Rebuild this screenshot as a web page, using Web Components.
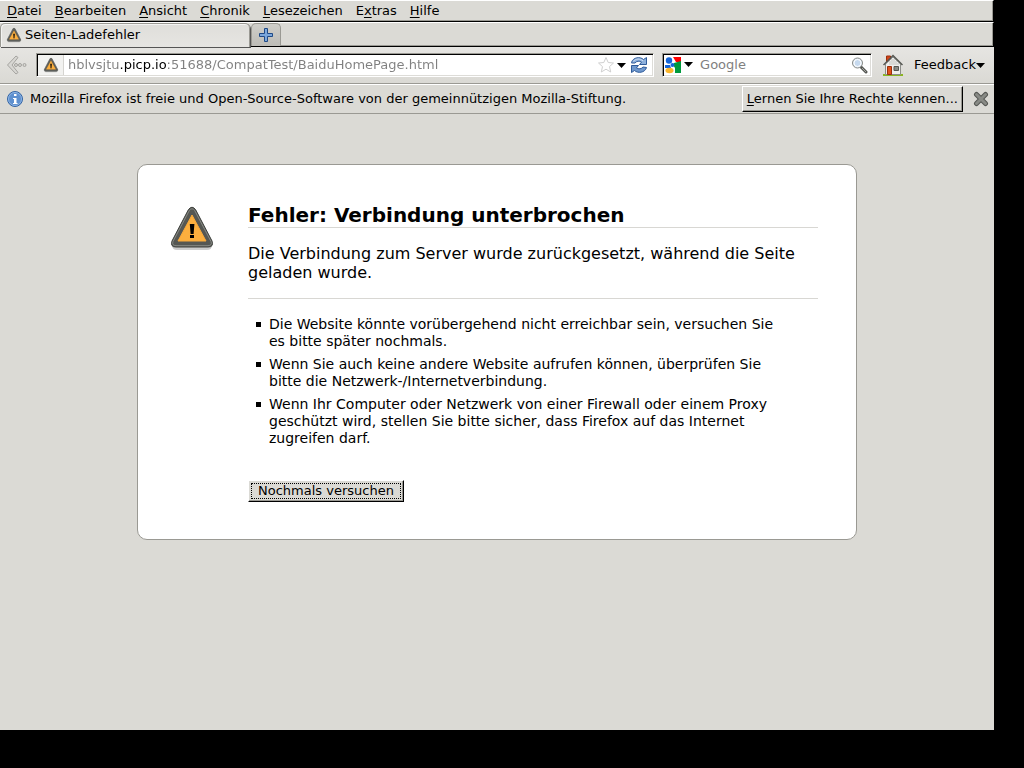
<!DOCTYPE html>
<html lang="de">
<head>
<meta charset="utf-8">
<title>Seiten-Ladefehler</title>
<style>
  html { background: #000; }
  body { margin: 0; font: 13px/16px "DejaVu Sans", sans-serif; color: #000; }
</style>
</head>
<body>
<browser-window>
  <menu-bar slot="chrome"></menu-bar>
  <tab-strip slot="chrome">Seiten-Ladefehler</tab-strip>
  <nav-toolbar slot="chrome"></nav-toolbar>
  <info-bar slot="chrome">Mozilla Firefox ist freie und Open-Source-Software von der gemeinnützigen Mozilla-Stiftung.</info-bar>
  <error-card>
    <span slot="title">Fehler: Verbindung unterbrochen</span>
    <span slot="summary">Die Verbindung zum Server wurde zurückgesetzt, während die Seite geladen wurde.</span>
  </error-card>
</browser-window>
<script>
  const define = (name, html) => {
    const template = document.createElement('template');
    template.innerHTML = html;
    customElements.define(name, class extends HTMLElement {
      constructor() {
        super();
        this.attachShadow({ mode: 'open' }).append(template.content.cloneNode(true));
      }
    });
  };

  define('warn-icon', `
    <style>
      :host { display: block; flex: none; width: 16px; height: 16px; }
      svg { display: block; width: 100%; height: 100%; }
    </style>
    <svg viewBox="0 0 48 48" aria-hidden="true">
      <path d="M4 41h40q0 5-5 5H9q-5 0-5-5z" fill="#000" opacity=".2"/>
      <path d="M20.500 5.500Q24 1 27.500 5.500L44 37Q46 43 40 43H8Q2 43 4 37Z" fill="#555753" stroke="#3e403c"/>
      <path d="M21.300 6.500Q24 3 26.700 6.500L43 37.500Q44.500 41.500 40 41.700H8Q3.500 41.500 5 37.500Z" fill="none" stroke="#888a85"/>
      <path d="M24 11 38 37H10Z" fill="#fcaf3e" stroke="#f9a93a" stroke-linejoin="round"/>
      <path d="M21.800 20h4.600l-.8 10h-3zM22 31h4v3h-4z" fill="#000"/>
    </svg>`);

  define('menu-bar', `
    <style>
      :host { display: flex; height: 19px; border-top: 1px solid #fff; border-bottom: 1px solid #000;
        border-right: 1px solid #000; box-shadow: inset -1px -1px #9a9993; padding: 0 0 1px 1px; }
      button { border: 0; background: none; margin: 0; padding: 0 7px 0 6px; font: inherit; color: inherit; }
      u { text-underline-offset: 2px; text-decoration-thickness: 1px; text-decoration-skip-ink: none; }
    </style>
    <button><u>D</u>atei</button><button><u>B</u>earbeiten</button><button><u>A</u>nsicht</button><button><u>C</u>hronik</button><button><u>L</u>esezeichen</button><button>E<u>x</u>tras</button><button><u>H</u>ilfe</button>`);

  define('tab-strip', `
    <style>
      :host { display: flex; box-sizing: border-box; height: 25px; border-top: 1px solid #fff;
        border-bottom: 1px solid #000; border-right: 1px solid #000; box-shadow: inset -1px -1px #9a9993; }
      button { box-sizing: border-box; margin: 0; font: inherit; color: inherit; border: 1px solid #9a9993;
        border-bottom: 0; border-radius: 5px 5px 0 0; }
      .tab { display: flex; align-items: center; gap: 3px; width: 250px; height: 24px; padding: 0 5px 2px;
        background: linear-gradient(#dfdeda, #e6e5e2); box-shadow: inset 1px 1px #f4f4f2, 1px 1px #555; z-index: 1; }
      .new { display: grid; place-items: center; width: 30px; height: 23px; margin-left: 1px; padding: 0;
        background: linear-gradient(#cfcec9, #bdbcb7); }
      svg { width: 16px; height: 16px; }
    </style>
    <button class="tab"><warn-icon></warn-icon><slot></slot></button>
    <button class="new" aria-label="Neuer Tab"><svg viewBox="0 0 16 16"><path d="M6.500 1.500h3v5h5v3h-5v5h-3v-5h-5v-3h5z" fill="#7ba7dc" stroke="#204a87"/></svg></button>`);

  define('nav-toolbar', `
    <style>
      :host { display: flex; align-items: center; box-sizing: border-box; height: 37px; padding: 0 9px 0 6px;
        background: linear-gradient(#e6e5e2, #dad9d4); border-bottom: 1px solid #9a9993; }
      button { display: flex; align-items: center; flex: none; margin: 0; padding: 0; border: 0; background: none;
        font: inherit; color: inherit; }
      svg { display: block; flex: none; }
      .field { display: flex; align-items: center; box-sizing: border-box; min-width: 0; height: 24px; background: #fff;
        border: 1px solid; border-color: #9a9993 #fff #fff #9a9993;
        box-shadow: inset 1px 1px #000, inset -1px -1px #dddcd8; padding: 2px 3px 2px 1px; }
      .url { flex: 3 1 0; margin-left: 8px; }
      .search { flex: 1 1 0; margin-left: 8px; }
      input { flex: 1; min-width: 0; box-sizing: border-box; height: 20px; margin: 0; border: 0; padding: 0 4px 2px;
        outline: 0; background: none; font: inherit; color: #808080; }
      input::placeholder { color: #808080; opacity: 1; }
      .url input { -webkit-text-fill-color: transparent; -webkit-background-clip: text; background-clip: text;
        background-image: linear-gradient(90deg, #808080 56px, #000 56px, #000 103px, #808080 103px); }
      .id { width: 26px; height: 20px; justify-content: center; background: #f2f2f0; border-right: 1px solid #d5d4d0; }
      .home { margin: 0 11px 0 11px; }
    </style>
    <button aria-label="Zurück"><svg width="22" height="22" viewBox="0 0 22 22"><path d="M10 2 1.500 11 10 20l2-1.500L6 11l6-7.500z" fill="#d8d7d3" stroke="#a4a39f"/><g fill="#d8d7d3" stroke="#a4a39f"><circle cx="10" cy="11" r="1.500"/><circle cx="14" cy="11" r="1.500"/><circle cx="18.500" cy="11" r="1.500"/></g></svg></button>
    <div class="field url">
      <button class="id" aria-label="Website-Identität"><warn-icon></warn-icon></button>
      <input aria-label="Adresse" value="hblvsjtu.picp.io:51688/CompatTest/BaiduHomePage.html">
      <button aria-label="Lesezeichen setzen"><svg width="18" height="18" viewBox="0 0 18 18"><path d="m9 1.500 2.200 5 5.300.5-4 3.600 1.200 5.400L9 13.200 4.300 16l1.200-5.400-4-3.600 5.300-.5z" fill="#fff" stroke="#d0d0d0"/></svg></button>
      <button aria-label="Verlauf"><svg width="13" height="16" viewBox="0 0 13 16"><path d="M2 6h9L6.500 11z"/></svg></button>
      <button aria-label="Neu laden"><svg width="22" height="18" viewBox="0 0 22 18"><g fill="#8db0dc" stroke="#2f5b9a" stroke-linejoin="round"><path d="M3.500 6.500C5 1 12.500.5 15.500 3.500L18.500 1.500V8.500H11.500L13.500 6.200C11.500 4.500 8.500 5 7 7H3.500z"/><path d="M18.500 11.500C17 17 9.500 17.500 6.500 14.500L3.500 16.500V9.500H10.500L8.500 11.800C10.500 13.500 13.500 13 15 11z" fill="#6f98cd"/></g><path d="M5.500 5.500C7.500 2.500 12 2.200 15 4.800" fill="none" stroke="#cfdff2"/></svg></button>
    </div>
    <div class="field search">
      <button aria-label="Suchmaschine"><svg width="32" height="18" viewBox="0 0 32 18"><path d="M9 1h8v5h-5z" fill="#f00"/><path d="M10 7 17 5v12h-6V12L9 9z" fill="#009a3d"/><circle cx="5" cy="4.500" r="3.200" fill="#1565d8"/><circle cx="8.500" cy="9" r="2" fill="#1565d8"/><path d="M1 9h5l1 3H1z" fill="#1565d8"/><ellipse cx="5.500" cy="14.500" rx="4" ry="2.700" fill="#fbb52a"/><path d="M20 6h9l-4.500 5z"/></svg></button>
      <input aria-label="Google-Suche" placeholder="Google">
      <button aria-label="Suchen"><svg width="17" height="18" viewBox="0 0 17 18"><path d="m10 11 5 5" stroke="#555753" stroke-width="3" stroke-linecap="round"/><path d="m11 12 4 4" stroke="#a5a7a2"/><circle cx="6.500" cy="7" r="5" fill="#dce8f5" stroke="#888a85"/><circle cx="6.500" cy="7" r="3.500" fill="#c6d9ee" stroke="#fff"/></svg></button>
    </div>
    <button class="home" aria-label="Startseite"><svg width="20" height="22" viewBox="0 0 20 22"><path d="M0 21h20" stroke="#8ab520" stroke-width="2"/><path d="M3.500 2h4v6h-4z" fill="#d2451a" stroke="#9b2f0b"/><path d="M2.500 10 10 3l7.500 7v10.500h-15z" fill="#eeeeec" stroke="#8c8d89"/><path d="M7 7v4M9 5v6M11 5v6M13 7v4M15 9v2" stroke="#c4c5c1"/><path d="M.5 11 10 1.500 19.500 11" fill="none" stroke="#555753" stroke-width="1.500"/><path d="M4.500 12.500h4v8h-4z" fill="#e0501b" stroke="#9b2f0b"/><path d="M11 12.500h4.500v4H11z" fill="#888a85" stroke="#555753"/></svg></button>
    <button class="feedback">Feedback<svg width="9" height="16" viewBox="0 0 9 16"><path d="M0 6h9L4.500 11z"/></svg></button>`);

  define('info-bar', `
    <style>
      :host { display: flex; align-items: center; box-sizing: border-box; height: 30px; padding: 0 5px 0 7px;
        border-top: 1px solid #fff; border-bottom: 1px solid #9a9993; }
      svg { display: block; flex: none; }
      p { flex: 1; margin: 0 0 0 7px; }
      button { margin: 0; padding: 0; border: 0; background: none; font: inherit; color: inherit; }
      .rights { box-sizing: border-box; height: 26px; padding: 0 4px 1px; border: 1px solid;
        border-color: #fff #000 #000 #fff; box-shadow: inset -1px -1px #9a9993; }
      .close { margin-left: 10px; }
      u { text-underline-offset: 2px; text-decoration-thickness: 1px; }
    </style>
    <svg width="16" height="16" viewBox="0 0 16 16" aria-hidden="true"><circle cx="8" cy="8" r="7.500" fill="#5e90cf" stroke="#3465a4"/><circle cx="8" cy="8" r="6.500" fill="none" stroke="#8fb4e3"/><path d="M7 3h2.500v2H7zM6 7h3.500v5h1v1H6v-1h1V8H6z" fill="#fff"/></svg>
    <p><slot></slot></p>
    <button class="rights"><u>L</u>ernen Sie Ihre Rechte kennen...</button>
    <button class="close" aria-label="Schließen"><svg width="16" height="16" viewBox="0 0 16 16"><path d="m3.500 3.500 9 9m0-9-9 9" stroke="#555753" stroke-width="5" stroke-linecap="round"/><path d="m3.500 3.500 9 9m0-9-9 9" stroke="#888a85" stroke-width="3" stroke-linecap="round"/></svg></button>`);

  define('error-card', `
    <style>
      :host { display: grid; grid-template-columns: 48px minmax(0, 1fr); column-gap: 32px; box-sizing: border-box;
        width: 100%; max-width: 720px; margin: 50px auto 0; padding: 39px 38px 37px 30px; background: #fff;
        border: 1px solid #9a9993; border-radius: 10px; }
      warn-icon { width: 48px; height: 48px; }
      h1 { margin: 0; font-size: 20px; line-height: 23px; border-bottom: 1px solid #d8d7d3; }
      .summary { margin: 0; padding: 16px 0; font-size: 16px; line-height: 19px; border-bottom: 1px solid #d8d7d3; }
      ul { display: grid; gap: 6px; margin: 17px 40px 0 0; padding: 0 0 0 8px; list-style: none;
        font-size: 14px; line-height: 17px; }
      li { display: grid; grid-template-columns: 5px minmax(0, 1fr); column-gap: 8px; }
      li::before { content: ""; height: 5px; margin-top: 6px; background: #000; }
      button { margin: 33px 0 0; padding: 2px; border: 1px solid; border-color: #fff #000 #000 #fff;
        background: #dbdad5; box-shadow: inset -1px -1px #9a9993; font: inherit; color: inherit; }
      button span { display: block; padding: 0 6px; border: 1px dotted #000; line-height: 14px; }
    </style>
    <warn-icon></warn-icon>
    <div>
      <h1><slot name="title"></slot></h1>
      <p class="summary"><slot name="summary"></slot></p>
      <ul>
        <li>Die Website könnte vorübergehend nicht erreichbar sein, versuchen Sie es bitte später nochmals.</li>
        <li>Wenn Sie auch keine andere Website aufrufen können, überprüfen Sie bitte die Netzwerk-/Internetverbindung.</li>
        <li>Wenn Ihr Computer oder Netzwerk von einer Firewall oder einem Proxy geschützt wird, stellen Sie bitte sicher, dass Firefox auf das Internet zugreifen darf.</li>
      </ul>
      <button><span>Nochmals versuchen</span></button>
    </div>`);

  define('browser-window', `
    <style>
      :host { display: flex; flex-direction: column; box-sizing: border-box; min-height: calc(100vh - 38px);
        margin: 0 30px 38px 0; background: #dbdad5; }
      main { flex: 1; }
    </style>
    <slot name="chrome"></slot>
    <main><slot></slot></main>`);
</script>
</body>
</html>
